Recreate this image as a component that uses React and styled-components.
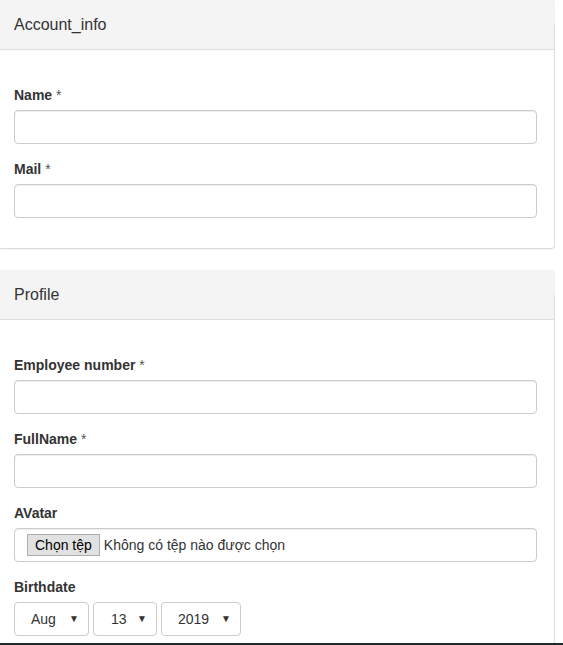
import React from 'react';
import styled, { createGlobalStyle } from 'styled-components';

const GlobalStyle = createGlobalStyle`
  html, body {
    margin: 0;
    padding: 0;
    background: #fff;
  }
  body {
    font-family: "Liberation Sans", Arial, Helvetica, sans-serif;
    font-size: 14px;
    line-height: 20px;
    color: #333;
    overflow: hidden;
  }
`;

const Page = styled.div`
  height: 645px;
  display: flex;
  flex-direction: column;
`;

const Content = styled.div`
  flex: 1;
  overflow: hidden;
`;

const Panel = styled.div`
  width: 555px;
  margin-left: -2px;
  margin-bottom: 21px;
  border: 1px solid #ddd;
  border-top: none;
  border-radius: 0 4px 4px 4px;
  background: #fff;
  box-shadow: 0 1px 1px rgba(0, 0, 0, 0.05);
`;

const Header = styled.div`
  position: relative;
  height: 49px;
  margin-right: -1px;
  padding: 0 15px;
  display: flex;
  align-items: center;
  background: #f4f4f4;
  border-bottom: 1px solid #ddd;
  border-top-right-radius: 3px;
  font-size: 16px;
  color: #333;

  &::after {
    content: '';
    position: absolute;
    right: 0;
    top: 25px;
    bottom: 0;
    width: 1px;
    background: #ddd;
  }
`;

const Body = styled.div`
  padding: 35px 15px 15px 15px;
`;

const Group = styled.div`
  display: flex;
  flex-direction: column;
  margin-bottom: 15px;
`;

const Label = styled.label`
  font-weight: bold;
  margin-bottom: 5px;
  line-height: 20px;
`;

const Star = styled.span`
  font-weight: normal;
  color: #555;
`;

const Input = styled.div`
  box-sizing: border-box;
  width: 523px;
  height: 34px;
  border: 1px solid #ccc;
  border-radius: 4px;
  box-shadow: inset 0 1px 1px rgba(0, 0, 0, 0.075);
  display: flex;
  align-items: center;
  padding: 0 12px;
  background: #fff;
`;

const FileButton = styled.span`
  box-sizing: border-box;
  height: 22px;
  padding: 0 7px;
  display: flex;
  align-items: center;
  background: #e1e1e1;
  border: 1px solid #adadad;
  color: #000;
  font-size: 14px;
`;

const FileText = styled.span`
  margin-left: 4px;
  color: #333;
`;

const SelectRow = styled.div`
  display: flex;
  gap: 4px;
`;

const Select = styled.div`
  box-sizing: border-box;
  width: ${(p) => p.$w}px;
  height: 34px;
  border: 1px solid #ccc;
  border-radius: 4px;
  display: flex;
  align-items: center;
  justify-content: space-between;
  padding: 0 9px 0 ${(p) => p.$pl}px;
  background: #fff;
  color: #333;
`;

const Arrow = styled.span`
  font-size: 10px;
  color: #333;
  line-height: 1;
`;

const BottomBar = styled.div`
  height: 2px;
  background: #1f2a2f;
`;

const Field = ({ label, required }) => (
  <Group>
    <Label>
      {label} {required && <Star>*</Star>}
    </Label>
    <Input />
  </Group>
);

export default function App() {
  return (
    <Page>
      <GlobalStyle />
      <Content>
        <Panel>
          <Header>Account_info</Header>
          <Body>
            <Field label="Name" required />
            <Field label="Mail" required />
          </Body>
        </Panel>
        <Panel>
          <Header>Profile</Header>
          <Body>
            <Field label="Employee number" required />
            <Field label="FullName" required />
            <Group>
              <Label>AVatar</Label>
              <Input>
                <FileButton>Chọn tệp</FileButton>
                <FileText>Không có tệp nào được chọn</FileText>
              </Input>
            </Group>
            <Group>
              <Label>Birthdate</Label>
              <SelectRow>
                <Select $w={75} $pl={16}>
                  Aug <Arrow>▼</Arrow>
                </Select>
                <Select $w={64} $pl={17}>
                  13 <Arrow>▼</Arrow>
                </Select>
                <Select $w={80} $pl={16}>
                  2019 <Arrow>▼</Arrow>
                </Select>
              </SelectRow>
            </Group>
          </Body>
        </Panel>
      </Content>
      <BottomBar />
    </Page>
  );
}
